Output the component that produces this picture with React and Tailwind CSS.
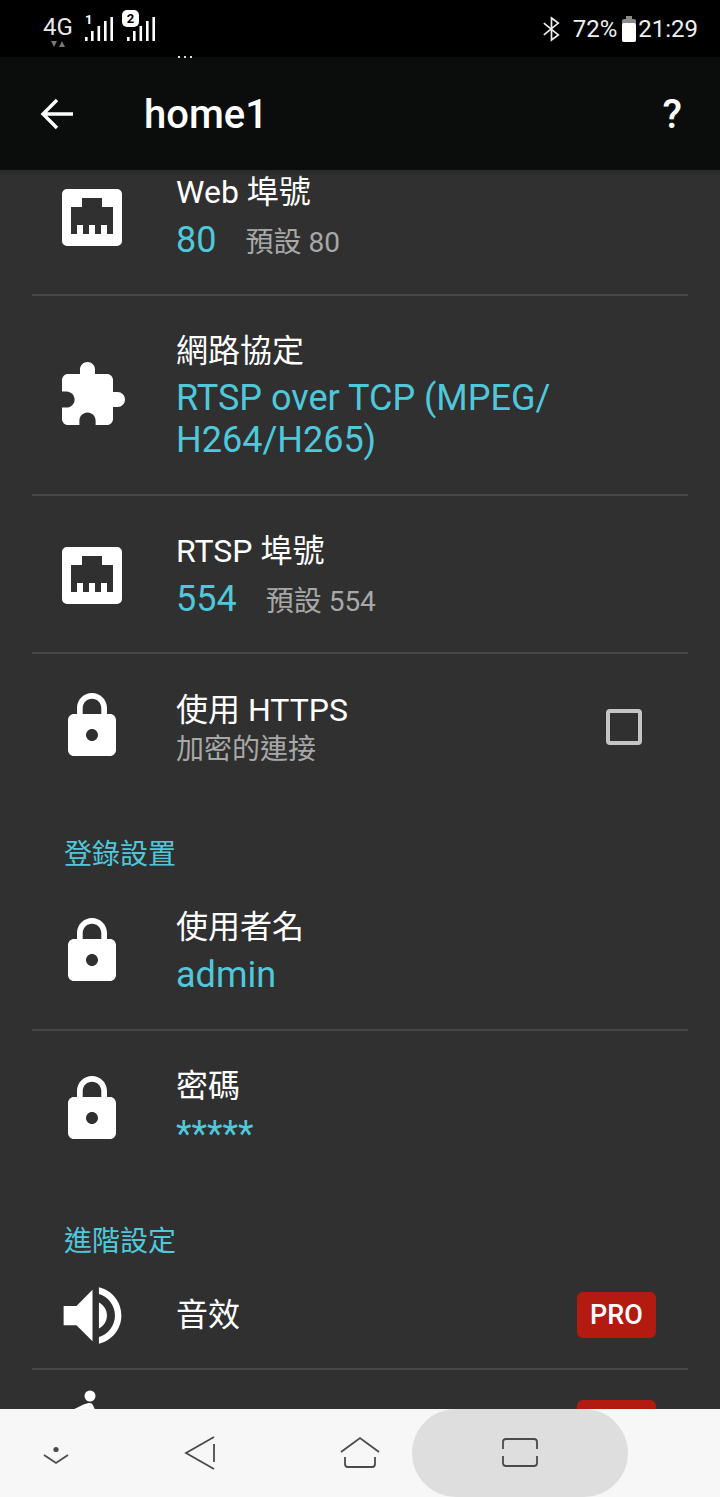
const FONT = "font-['Roboto','Noto_Sans_CJK_TC',sans-serif]";

const Ethernet = () => (
  <svg width="72" height="72" viewBox="0 -1 72 72">
    <path fill="#fff" fillRule="evenodd" d="M11 8h50a5 5 0 0 1 5 5v47a5 5 0 0 1-5 5H11a5 5 0 0 1-5-5V13a5 5 0 0 1 5-5zM15 26v27h6v-9h6v9h6v-9h6v9h6v-9h6v9h6V26h-11v-9H26v9z" />
  </svg>
);
const Puzzle = () => (
  <svg width="72" height="72" viewBox="0 0 24 24" fill="#fff">
    <path d="M20.5 11H19V7c0-1.1-.9-2-2-2h-4V3.5C13 2.12 11.88 1 10.5 1S8 2.12 8 3.5V5H4c-1.1 0-1.99.9-1.99 2v3.8H3.5c1.49 0 2.7 1.21 2.7 2.7s-1.21 2.7-2.7 2.7H2V20c0 1.1.9 2 2 2h3.8v-1.5c0-1.49 1.21-2.7 2.7-2.7 1.49 0 2.7 1.21 2.7 2.7V22H17c1.1 0 2-.9 2-2v-4h1.5c1.38 0 2.5-1.12 2.5-2.5S21.88 11 20.5 11z" />
  </svg>
);
const Lock = () => (
  <svg width="72" height="72" viewBox="0 0 24 24" fill="#fff">
    <path d="M18 8h-1V6c0-2.76-2.24-5-5-5S7 3.24 7 6v2H6c-1.1 0-2 .9-2 2v10c0 1.1.9 2 2 2h12c1.1 0 2-.9 2-2V10c0-1.1-.9-2-2-2zm-6 9c-1.1 0-2-.9-2-2s.9-2 2-2 2 .9 2 2-.9 2-2 2zm3.1-9H8.9V6c0-1.71 1.39-3.1 3.1-3.1 1.71 0 3.1 1.39 3.1 3.1v2z" />
  </svg>
);
const Volume = () => (
  <svg width="77" height="77" viewBox="0 0 24 24" fill="#fff">
    <path d="M3 9v6h4l5 5V4L7 9H3zm13.5 3c0-1.77-1.02-3.29-2.5-4.03v8.05c1.48-.73 2.5-2.25 2.5-4.02zM14 3.23v2.06c2.89.86 5 3.54 5 6.71s-2.11 5.85-5 6.71v2.06c4.01-.91 7-4.49 7-8.77s-2.99-7.86-7-8.77z" />
  </svg>
);
const Person = () => (
  <svg width="72" height="72" viewBox="0 0 72 72" fill="#fff">
    <circle cx="35" cy="8" r="5.5" />
    <path d="M35 15c-5 0-9 3-20 8l3 5 11-4v20h12V24c-2-4-3-9-6-9z" />
  </svg>
);

const Signal = () => (
  <svg width="28" height="24" viewBox="0 0 28 24" fill="#fff">
    <rect x="0" y="20" width="2.6" height="4" />
    <rect x="6" y="14" width="2.6" height="10" />
    <rect x="12.5" y="9" width="2.6" height="15" />
    <rect x="19" y="4" width="2.6" height="20" />
    <rect x="25.4" y="0" width="2.6" height="24" />
  </svg>
);

const Pro = () => (
  <span className="flex h-[46px] w-[79px] items-center justify-center rounded-md bg-[#b31b10] text-[27px] font-medium leading-none text-white">
    PRO
  </span>
);

function Row({ h, icon, title, value, hint, sub, right, textClass = "" }) {
  return (
    <div className={`flex items-center ${h}`}>
      <div className="flex w-[120px] shrink-0 justify-center">{icon}</div>
      <div className={`ml-[24px] min-w-0 flex-1 ${textClass}`}>
        <div className="h-[48px] text-[32px] leading-[48px] text-white">{title}</div>
        {value && (
          <div className="flex h-[48px] items-baseline gap-[29px] text-[36px] leading-[48px] text-[#4fc8dc]">
            <span>{value}</span>
            {hint && <span className="text-[28px] text-[#a8a8a8]">{hint}</span>}
          </div>
        )}
        {sub && <div className="text-[28px] leading-[32px] text-[#a8a8a8]">{sub}</div>}
      </div>
      {right}
    </div>
  );
}

const Divider = () => <div className="h-[2px] bg-[#474747]" />;

export default function App() {
  return (
    <div className={`relative flex h-[1497px] w-[720px] flex-col overflow-hidden bg-[#303030] ${FONT}`}>
      {/* status bar */}
      <div className="relative flex h-[57px] shrink-0 items-center bg-black pl-[42px] pr-[22px] text-white">
        <div className="relative flex h-[40px] w-[32px] flex-col items-center">
          <span className="mt-[5px] text-[24px] leading-[26px] text-[#e8e8e8]">4G</span>
          <svg width="14" height="6" viewBox="0 0 14 6" className="mt-[1px] shrink-0" fill="#777">
            <path d="M0 0h6L3 6zM8 6l3-6 3 6z" />
          </svg>
        </div>
        <div className="relative mb-[5px] ml-[11px] h-[30px] w-[28px]">
          <span className="absolute left-[0px] top-[1px] text-[13px] font-bold leading-[16px]">1</span>
          <div className="absolute bottom-0 left-0 flex"><Signal /></div>
        </div>
        <div className="relative mb-[5px] ml-[14px] h-[30px] w-[28px]">
          <div className="absolute bottom-0 left-0 flex"><Signal /></div>
          <span className="absolute left-[-5px] top-[-1px] flex h-[17px] w-[17px] items-center justify-center rounded-[5px] bg-white text-[13px] font-bold leading-none text-black">2</span>
        </div>
        <div className="ml-auto flex items-center text-[24px] leading-none text-[#f0f0f0]">
          <svg width="17" height="28" viewBox="0 0 20 28" fill="none" stroke="#eee" strokeWidth="2" className="mr-[13px]">
            <path d="M1 7l17 14-8 6V1l8 6L1 21" />
          </svg>
          <span>72%</span>
          <svg width="16" height="26" viewBox="0 0 16 26" className="ml-[4px] mr-[1px]">
            <rect x="1" y="3" width="14" height="23" rx="2" fill="#8a8a8a" />
            <rect x="5" y="0" width="6" height="3" fill="#8a8a8a" />
            <rect x="1" y="7" width="14" height="19" rx="2" fill="#fff" />
          </svg>
          <span>21:29</span>
        </div>
        <div className="absolute bottom-[-1px] left-[178px] flex gap-[4px]">
          <span className="h-[2px] w-[2px] bg-[#ddd]" />
          <span className="h-[2px] w-[2px] bg-[#ddd]" />
          <span className="h-[2px] w-[2px] bg-[#ddd]" />
        </div>
      </div>

      {/* app bar */}
      <div className="flex h-[113px] shrink-0 items-center bg-[#0a0d0b] pl-[40px] pr-[38px] text-white">
        <svg width="33" height="32" viewBox="0 0 33 32" fill="none" stroke="#fff" strokeWidth="3.4">
          <path d="M33 16H3M17 2L3 16l14 14" />
        </svg>
        <span className="ml-[71px] mt-[2px] text-[40px] font-medium leading-none">home1</span>
        <span className="ml-auto mt-[2px] text-[40px] font-medium leading-none">?</span>
      </div>

      {/* list */}
      <div className="relative min-h-0 flex-1 overflow-hidden">
        <div className="pointer-events-none absolute inset-x-0 top-0 z-10 h-[8px] bg-gradient-to-b from-[#292929] to-transparent" />
        <div className="mt-[-33px] px-[32px]">
          <Row h="h-[157px]" icon={<Ethernet />} title="Web 埠號" value="80" hint="預設 80" />
          <Divider />
          <div className="flex h-[198px] items-center">
            <div className="flex w-[120px] shrink-0 justify-center"><Puzzle /></div>
            <div className="ml-[24px] min-w-0 flex-1 pb-[1px]">
              <div className="h-[48px] text-[32px] leading-[44px] text-white">網路協定</div>
              <div className="w-[400px] text-[36px] leading-[42px] text-[#4fc8dc]">RTSP over TCP (MPEG/ H264/H265)</div>
            </div>
          </div>
          <Divider />
          <Row h="h-[156px]" icon={<Ethernet />} title="RTSP 埠號" value="554" hint="預設 554" textClass="pt-[2px]" />
          <Divider />
          <Row
            h="h-[144px]"
            icon={<Lock />}
            title="使用 HTTPS"
            sub="加密的連接"
            right={<span className="mr-[46px] mt-[2px] h-[36px] w-[36px] shrink-0 rounded-[4px] border-[4px] border-[#c4c4c4]" />}
          />
          <div className="pl-[32px] pt-[40px] text-[28px] leading-[34px] text-[#4fc8dc]">登錄設置</div>
          <Row h="h-[157px]" icon={<Lock />} title="使用者名" value="admin" />
          <Divider />
          <Row h="h-[156px]" icon={<Lock />} title="密碼" value="*****" textClass="pt-[2px]" />
          <div className="pl-[32px] pt-[35px] text-[28px] leading-[40px] text-[#4fc8dc]">進階設定</div>
          <div className="flex h-[106px] items-center">
            <div className="flex w-[121px] shrink-0 justify-center"><Volume /></div>
            <span className="ml-[23px] text-[32px] text-white">音效</span>
            <span className="ml-auto mr-[32px]"><Pro /></span>
          </div>
          <Divider />
          <div className="flex h-[100px] items-start">
            <div className="flex w-[117px] shrink-0 justify-center pt-[18px]"><Person /></div>
            <span className="ml-auto mr-[32px] mt-[30px]"><Pro /></span>
          </div>
        </div>
      </div>

      {/* nav bar */}
      <div className="relative flex h-[88px] shrink-0 items-center bg-[#f7f7f7]">
        <div className="absolute left-[412px] top-0 h-[88px] w-[216px] rounded-full bg-[#dedede]" />
        <svg width="720" height="88" viewBox="0 1409 720 88" fill="none" stroke="#4a4a4a" strokeWidth="1.8" className="relative">
          <circle cx="56" cy="1449.5" r="2.6" fill="#4a4a4a" stroke="none" />
          <path d="M44 1455l12 8 12-8" />
          <path d="M214 1437l-28 16 28 16M214 1444v18" />
          <path d="M341 1452l19-14 19 14M345 1457v7a3 3 0 0 0 3 3h24a3 3 0 0 0 3-3v-7" />
          <path d="M503 1449v-7a3 3 0 0 1 3-3h28a3 3 0 0 1 3 3v7M503 1456v7a3 3 0 0 0 3 3h28a3 3 0 0 0 3-3v-7" />
        </svg>
      </div>
    </div>
  );
}
